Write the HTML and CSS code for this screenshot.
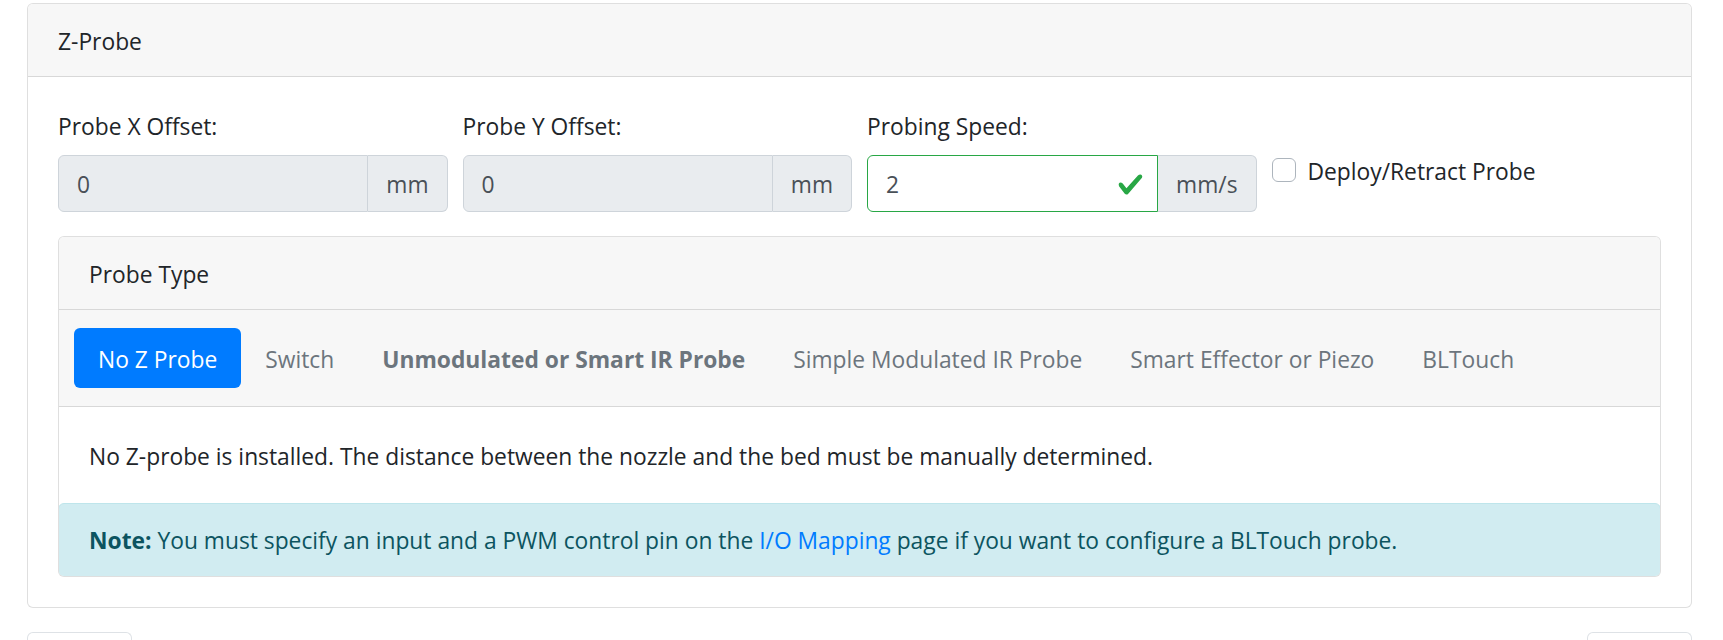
FILE: index.html
```html
<!DOCTYPE html>
<html lang="en">
<head>
<meta charset="utf-8">
<title>Z-Probe</title>
<link rel="stylesheet" href="styles.css">
</head>
<body>
<div class="card outer">
  <div class="card-header">Z-Probe</div>
  <div class="card-body">
    <div class="form-grid">
      <div class="field">
        <label class="lbl">Probe X Offset:</label>
        <div class="input-group">
          <div class="form-control readonly">0</div>
          <div class="addon">mm</div>
        </div>
      </div>
      <div class="field">
        <label class="lbl">Probe Y Offset:</label>
        <div class="input-group">
          <div class="form-control readonly">0</div>
          <div class="addon">mm</div>
        </div>
      </div>
      <div class="field">
        <label class="lbl">Probing Speed:</label>
        <div class="input-group">
          <div class="form-control valid"><span>2</span>
            <svg class="valid-icon" viewBox="0 0 8 8" width="27" height="27"><path fill="#28a745" d="M2.3 6.73L.6 4.53c-.4-1.04.46-1.4 1.1-.8l1.1 1.4 3.4-3.8c.6-.63 1.6-.27 1.2.7l-4 4.6c-.43.5-.8.4-1.1.1z"/></svg>
          </div>
          <div class="addon">mm/s</div>
        </div>
      </div>
      <div class="field check-field">
        <label class="check"><span class="box"></span><span class="check-text">Deploy/Retract Probe</span></label>
      </div>
    </div>

    <div class="card inner">
      <div class="card-header">Probe Type</div>
      <div class="card-header pills-bar">
        <nav class="pills">
          <a class="pill active">No Z Probe</a>
          <a class="pill">Switch</a>
          <a class="pill bold">Unmodulated or Smart IR Probe</a>
          <a class="pill">Simple Modulated IR Probe</a>
          <a class="pill">Smart Effector or Piezo</a>
          <a class="pill">BLTouch</a>
        </nav>
      </div>
      <div class="card-body">No Z-probe is installed. The distance between the nozzle and the bed must be manually determined.</div>
      <div class="alert"><strong>Note:</strong> You must specify an input and a PWM control pin on the <a class="link">I/O Mapping</a> page if you want to configure a BLTouch probe.</div>
    </div>
  </div>
</div>
<div class="footer-buttons">
  <span class="btn"></span>
  <span class="btn"></span>
</div>
</body>
</html>
```

FILE: styles.css
```css
html, body {
  margin: 0;
  padding: 0;
  background: #fff;
  overflow: hidden;
}
body {
  font-family: "Open Sans", "Noto Sans", "Liberation Sans", sans-serif;
  font-size: 22.8px;
  line-height: 36px;
  color: #212529;
  height: 640px;
}
.card {
  border: 1px solid rgba(0,0,0,.125);
  border-radius: 6px;
  background: #fff;
  display: flex;
  flex-direction: column;
  overflow: hidden;
}
.outer {
  margin: 3px 31px 0 27px;
}
.card-header {
  background: #f7f7f7;
  border-bottom: 1px solid rgba(0,0,0,.125);
  padding: 20px 30px 16px;
}
.card-body {
  padding: 30px;
}
.form-grid {
  display: grid;
  grid-template-columns: repeat(4, 1fr);
  column-gap: 15px;
  margin-bottom: 24px;
}
.lbl {
  display: block;
  padding-top: 2px;
  margin-bottom: 10px;
}
.input-group {
  display: flex;
  height: 57px;
}
.form-control {
  flex: 1;
  min-width: 0;
  display: flex;
  align-items: center;
  justify-content: space-between;
  padding: 2px 13px 0 18px;
  border: 1px solid #ced4da;
  border-radius: 6px 0 0 6px;
  color: #495057;
  background: #fff;
}
.form-control.readonly {
  background: #e9ecef;
}
.form-control.valid {
  border-color: #28a745;
}
.valid-icon {
  display: block;
}
.addon {
  display: flex;
  align-items: center;
  padding: 2px 18px 0;
  background: #e9ecef;
  border: 1px solid #ced4da;
  border-left: 0;
  border-radius: 0 6px 6px 0;
  color: #495057;
}
.check-field {
  padding-top: 45px;
}
.check {
  display: flex;
  align-items: flex-start;
}
.check-text {
  padding-top: 2px;
}
.box {
  width: 24px;
  height: 24px;
  box-sizing: border-box;
  border: 1px solid #adb5bd;
  border-radius: 6px;
  background: #fff;
  margin: 6px 12px 0 0;
  flex: none;
}
.pills-bar {
  padding: 18px 15px;
}
.pills {
  display: flex;
}
.pill {
  padding: 14px 24px 10px;
  border-radius: 6px;
  color: #6c757d;
}
.pill.active {
  background: #007bff;
  color: #fff;
}
.pill.bold {
  font-weight: 700;
}
.inner .card-body {
  padding: 32px 30px 28px;
}
.alert {
  margin: 0 -1px -1px -1px;
  padding: 19px 30px 17px;
  background: #d1ecf1;
  border: 1px solid #bee5eb;
  border-radius: 6px;
  color: #0c5460;
}
.alert strong {
  font-weight: 700;
}
.link {
  color: #007bff;
}
.footer-buttons {
  display: flex;
  justify-content: space-between;
  margin: 24px 31px 0 27px;
}
.btn {
  display: block;
  width: 105px;
  height: 9px;
  box-sizing: border-box;
  border: 1px solid #dee2e6;
  border-bottom: 0;
  border-radius: 6px 6px 0 0;
  background: #fff;
}
```
